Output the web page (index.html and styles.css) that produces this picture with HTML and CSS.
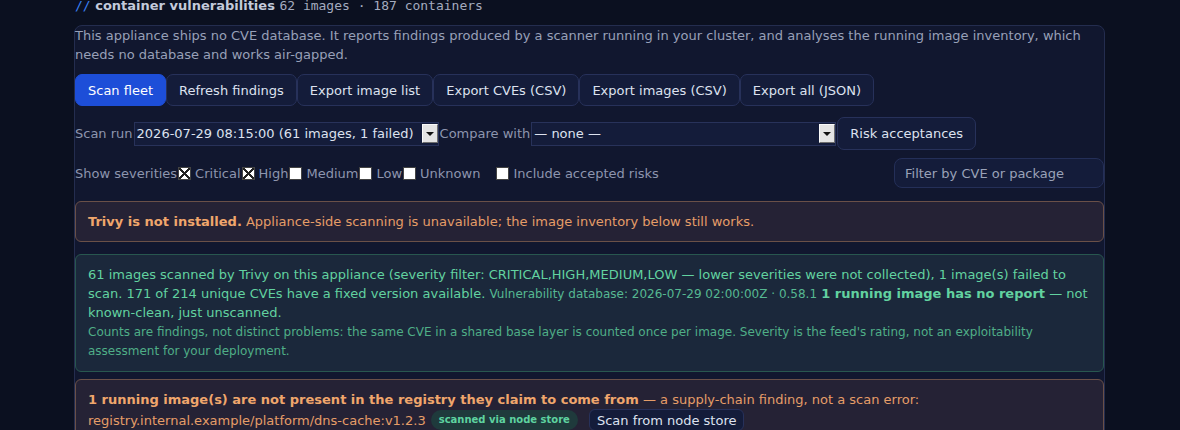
FILE: index.html
```html
<!DOCTYPE html>
<html lang="en">
<head>
    <meta charset="UTF-8">
    <meta name="viewport" content="width=device-width, initial-scale=1.0">
    <title>Container vulnerabilities</title>
    <link rel="stylesheet" href="styles.css">
</head>
<body>
    <div class="page">
        <h2 class="title"><span class="slashes">//</span> container vulnerabilities <span class="counts">62 images · 187 containers</span></h2>

        <div class="panel">
            <p class="intro">This appliance ships no CVE database. It reports findings produced by a scanner running in your cluster, and analyses the running image inventory, which needs no database and works air-gapped.</p>

            <div class="actions">
                <button type="button" class="btn primary">Scan fleet</button>
                <button type="button" class="btn">Refresh findings</button>
                <button type="button" class="btn">Export image list</button>
                <button type="button" class="btn">Export CVEs (CSV)</button>
                <button type="button" class="btn">Export images (CSV)</button>
                <button type="button" class="btn">Export all (JSON)</button>
            </div>

            <div class="runs">
                <label for="scanRun">Scan run</label>
                <span class="select">
                    <select id="scanRun">
                        <option>2026-07-29 08:15:00 (61 images, 1 failed)</option>
                    </select>
                </span>
                <label for="compareRun">Compare with</label>
                <span class="select">
                    <select id="compareRun">
                        <option>— none —</option>
                    </select>
                </span>
                <button type="button" class="btn tall">Risk acceptances</button>
            </div>

            <div class="filters">
                <span>Show severities</span>
                <label class="check"><input type="checkbox" checked> Critical</label>
                <label class="check"><input type="checkbox" checked> High</label>
                <label class="check"><input type="checkbox"> Medium</label>
                <label class="check"><input type="checkbox"> Low</label>
                <label class="check"><input type="checkbox"> Unknown</label>
                <label class="check accepted"><input type="checkbox"> Include accepted risks</label>
                <input type="text" class="search" placeholder="Filter by CVE or package">
            </div>

            <div class="alert warn">
                <strong>Trivy is not installed.</strong> Appliance-side scanning is unavailable; the image inventory below still works.
            </div>

            <div class="alert ok">
                <p>61 images scanned by Trivy on this appliance (severity filter: CRITICAL,HIGH,MEDIUM,LOW — lower severities were not collected), 1 image(s) failed to scan. 171 of 214 unique CVEs have a fixed version available. <small>Vulnerability database: 2026-07-29 02:00:00Z · 0.58.1</small> <strong>1 running image has no report</strong> — not known-clean, just unscanned.</p>
                <p class="note">Counts are findings, not distinct problems: the same CVE in a shared base layer is counted once per image. Severity is the feed's rating, not an exploitability assessment for your deployment.</p>
            </div>

            <div class="alert warn last">
                <strong>1 running image(s) are not present in the registry they claim to come from</strong> — a supply-chain finding, not a scan error:
                <div class="missing">
                    <span>registry.internal.example/platform/dns-cache:v1.2.3</span>
                    <span class="badge">scanned via node store</span>
                    <button type="button" class="btn small">Scan from node store</button>
                </div>
            </div>
        </div>
    </div>
</body>
</html>
```

FILE: styles.css
```css
body {
    margin: 0;
    padding: 0;
    background-color: #0b1020;
    color: #c9d0e3;
    font-family: "DejaVu Sans", "Liberation Sans", sans-serif;
    font-size: 13px;
    line-height: 19px;
    overflow: hidden;
}
.page {
    padding: 0 75px 0 74px;
}
.title {
    margin: -4px 0 9px 1px;
    font-size: 13px;
    line-height: 20px;
    font-weight: bold;
    color: #c3cadb;
}
.slashes {
    font-family: "DejaVu Sans Mono", "Liberation Mono", monospace;
    color: #3b82f6;
    font-weight: normal;
}
.counts {
    font-family: "DejaVu Sans Mono", "Liberation Mono", monospace;
    font-weight: normal;
    color: #a4abbf;
}
.panel {
    background-color: #11172f;
    border: 1px solid #242d4f;
    border-radius: 8px;
}
.intro {
    margin: 0;
    color: #98a0b8;
}
.actions {
    display: flex;
    margin-top: 10px;
}
.btn {
    height: 32px;
    padding: 0 12px;
    background-color: #141c3a;
    color: #dde2ef;
    border: 1px solid #27315a;
    border-radius: 7px;
    font-family: inherit;
    font-size: 13px;
    cursor: pointer;
}
.btn.primary {
    background-color: #1d4ed8;
    border-color: #1d4ed8;
    color: #fff;
}
.btn.tall {
    height: 33px;
}
.btn.small {
    height: 22px;
    padding: 0 7px;
    border-radius: 6px;
}
.runs {
    display: flex;
    align-items: center;
    gap: 1px;
    margin-top: 11px;
    color: #8d95ae;
}
/* dark select with the old grey arrow button on the right */
.select {
    position: relative;
    display: flex;
}
.select::after {
    content: "";
    position: absolute;
    top: 2px;
    right: 1px;
    width: 14px;
    height: 17px;
    background-color: #e4e4e4;
    border: 1px solid;
    border-color: #fafafa #6e6e6e #6e6e6e #fafafa;
    pointer-events: none;
}
.select::before {
    content: "";
    position: absolute;
    top: 10px;
    right: 5px;
    border-left: 4px solid transparent;
    border-right: 4px solid transparent;
    border-top: 4px solid #111;
    z-index: 1;
    pointer-events: none;
}
select {
    appearance: none;
    width: 305px;
    height: 24px;
    padding: 0 20px 0 2px;
    background-color: #141c3a;
    color: #dde2ef;
    border: 1px solid #28325a;
    border-radius: 0;
    font-family: inherit;
    font-size: 13px;
}
.filters {
    display: flex;
    align-items: center;
    margin-top: 8px;
    height: 30px;
    color: #8d95ae;
}
.check {
    display: flex;
    align-items: center;
    gap: 4px;
}
.check input {
    appearance: none;
    box-sizing: border-box;
    width: 13px;
    height: 13px;
    margin: 0 0 0 1px;
    background-color: #fff;
    border: 1px solid #444;
}
.check input:checked {
    background:
        linear-gradient(45deg, transparent 45%, #222 45%, #222 55%, transparent 55%),
        linear-gradient(-45deg, transparent 45%, #222 45%, #222 55%, transparent 55%),
        #fff;
}
.accepted {
    margin-left: 15px;
}
.search {
    margin-left: auto;
    width: 210px;
    height: 30px;
    box-sizing: border-box;
    padding: 0 10px;
    background-color: #141c3a;
    color: #dde2ef;
    border: 1px solid #242f58;
    border-radius: 8px;
    font-family: inherit;
    font-size: 13px;
}
.search::placeholder {
    color: #9aa2b8;
}
.alert {
    padding: 10px 12px;
    border: 1px solid;
    border-radius: 6px;
}
.alert p {
    margin: 0;
}
.warn {
    margin-top: 13px;
    background-color: #252235;
    border-color: #6a5048;
    color: #e59d68;
}
.warn strong {
    color: #f0a66c;
}
.ok {
    margin-top: 12px;
    background-color: #1b283b;
    border-color: #28574f;
    color: #62d2a0;
}
.ok small {
    font-size: 12px;
    line-height: 1;
    color: #56b892;
}
.ok .note {
    margin-top: 1px;
    font-size: 12px;
    line-height: 19px;
    color: #4fae87;
}
.warn.last {
    margin-top: 7px;
}
.missing {
    display: flex;
    align-items: center;
    gap: 5px;
}
.badge {
    padding: 0 8px;
    line-height: 20px;
    border-radius: 10px;
    background-color: #1f3a3c;
    color: #5ed3a0;
    font-size: 10px;
    font-weight: bold;
}
.missing .btn {
    margin-left: 6px;
}
```
